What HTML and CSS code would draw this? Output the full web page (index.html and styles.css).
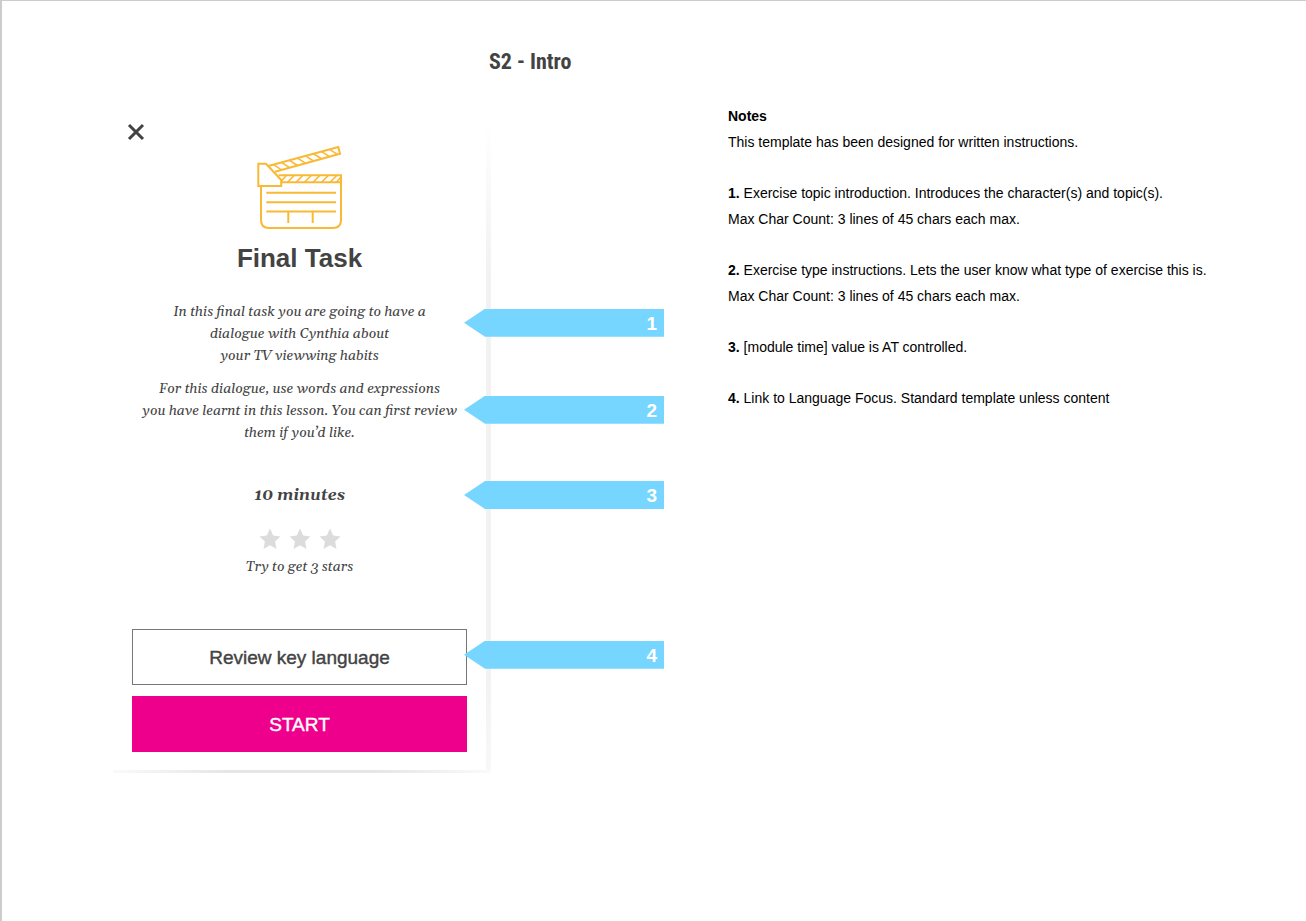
FILE: index.html
```html
<!DOCTYPE html>
<html lang="en">
<head>
<meta charset="utf-8">
<meta name="viewport" content="width=device-width, initial-scale=1">
<title>S2 - Intro</title>
<link rel="stylesheet" href="styles.css">
</head>
<body>
<div class="sheet">
  <h1 class="sheet-title">S2 - Intro</h1>
  <div class="columns">
    <main class="card">
      <button class="close" type="button" aria-label="Close">
        <svg width="18" height="18" viewBox="0 0 18 18"><path d="M2 2L16 16M16 2L2 16"/></svg>
      </button>
      <svg class="clapper" width="86" height="86" viewBox="0.5 0 86 86" aria-hidden="true">
        <path d="M4.500 41V75Q4.500 83 12.500 83H76.500Q84.500 83 84.500 75V30.300H22M24.500 37.300H84"/>
        <path d="M1.800 18.700H9.500L24.700 35V41H1.800Z"/>
        <path d="M11.800 21L81.800 2L83.500 8.700L18.500 26.700"/>
        <path class="hatch" d="M17 19.600L25 24.900M25 17.400L33 22.700M33 15.300L41 20.500M41 13.100L49 18.200M49 10.900L57 16M57 8.800L65 13.800M65 6.600L73 11.600M73 4.400L81 9.400"/>
        <path class="hatch" d="M25 36L30 30.300M31 37.300L38 30.300M39.500 37.300L46.500 30.300M48 37.300L55 30.300M56.500 37.300L63.500 30.300M65 37.300L72 30.300M73.500 37.300L80.500 30.300M80 37.300L84.500 32"/>
        <path d="M9.800 47.700H79.500M9.800 57.300H79.500M9.800 66.500H79.500M31.800 66.500V78M56.200 66.500V78"/>
      </svg>
      <h2 class="card-title">Final Task</h2>
      <div class="annotated topic">
        <p>In this final task you are going to have a<br>dialogue with Cynthia about<br>your TV viewwing habits</p>
        <span class="marker">1</span>
      </div>
      <div class="annotated exercise">
        <p>For this dialogue, use words and expressions<br>you have learnt in this lesson. You can first review<br>them if you’d like.</p>
        <span class="marker">2</span>
      </div>
      <div class="annotated time">
        <strong>10 minutes</strong>
        <span class="marker">3</span>
      </div>
      <div class="stars" aria-hidden="true">
        <svg width="22" height="22" viewBox="0 0 22 22"><path d="M11 0.500L14.200 7.500L21.500 8.400L16.100 13.500L17.500 21L11 17.300L4.500 21L5.900 13.500L0.500 8.400L7.800 7.500Z"/></svg>
        <svg width="22" height="22" viewBox="0 0 22 22"><path d="M11 0.500L14.200 7.500L21.500 8.400L16.100 13.500L17.500 21L11 17.300L4.500 21L5.900 13.500L0.500 8.400L7.800 7.500Z"/></svg>
        <svg width="22" height="22" viewBox="0 0 22 22"><path d="M11 0.500L14.200 7.500L21.500 8.400L16.100 13.500L17.500 21L11 17.300L4.500 21L5.900 13.500L0.500 8.400L7.800 7.500Z"/></svg>
      </div>
      <p class="goal">Try to get 3 stars</p>
      <div class="annotated actions">
        <button class="btn btn-outline" type="button">Review key language</button>
        <span class="marker">4</span>
      </div>
      <button class="btn btn-primary" type="button">START</button>
    </main>
    <aside class="notes">
      <div>
        <h2 class="notes-title">Notes</h2>
        <p>This template has been designed for written instructions.</p>
      </div>
      <p><b>1.</b> Exercise topic introduction. Introduces the character(s) and topic(s).<br>Max Char Count: 3 lines of 45 chars each max.</p>
      <p><b>2.</b> Exercise type instructions. Lets the user know what type of exercise this is.<br>Max Char Count: 3 lines of 45 chars each max.</p>
      <p><b>3.</b> [module time] value is AT controlled.</p>
      <p><b>4.</b> Link to Language Focus. Standard template unless content</p>
    </aside>
  </div>
</div>
</body>
</html>
```
FILE: styles.css
```css
* { box-sizing: border-box; }
body {
  margin: 0;
  background: #fff;
  color: #000;
  font-family: "Liberation Sans", Arial, sans-serif;
}
h1, h2, p { margin: 0; }
button { font: inherit; cursor: pointer; }

.sheet {
  min-height: 100vh;
  border-top: 1px solid #ccc;
  border-left: 2px solid #ccc;
  padding: 48px 40px 40px 111px;
}
.sheet-title {
  padding-left: 376px;
  color: #434343;
  font-family: "Roboto Condensed", Roboto, sans-serif;
  font-size: 22px;
  line-height: 26px;
}
.columns {
  display: grid;
  grid-template-columns: 378px minmax(0, 1fr);
  column-gap: 237px;
  align-items: start;
  padding-top: 28px;
}

.card {
  display: flex;
  flex-direction: column;
  padding: 20px 24px 21px 19px;
  color: #434343;
  text-align: center;
  background:
    linear-gradient(to right, #fafafa, #e6e6e6 30%, #e6e6e6 70%, #fafafa) left bottom / 100% 3px no-repeat,
    linear-gradient(to bottom, #fff 3%, #f2f2f2 25%, #f2f2f2 85%, #f8f8f8) right top / 5px 100% no-repeat;
}
.close {
  align-self: flex-start;
  height: 18px;
  margin-left: -5px;
  padding: 0;
  border: 0;
  background: none;
}
.close svg { display: block; fill: none; stroke: #434343; stroke-width: 3; }
.clapper {
  align-self: center;
  margin-top: 4px;
  fill: none;
  stroke: #f9b934;
  stroke-width: 2;
}
.card-title {
  margin-top: 10px;
  font-size: 26px;
  line-height: 34px;
}
.annotated { position: relative; }
.topic, .exercise, .time, .goal {
  font-family: Georgia, Gelasio, "Liberation Serif", serif;
  font-style: italic;
  font-size: 14px;
  line-height: 22px;
}
.topic { margin-top: 26px; }
.exercise { margin-top: 11px; }
.time { margin-top: 40px; font-size: 16px; }
.stars {
  display: flex;
  justify-content: center;
  gap: 8px;
  margin-top: 22px;
}
.stars svg { fill: #dcdcdc; }
.goal { margin-top: 6px; }
.actions { margin-top: 51px; }

.btn {
  display: block;
  width: 100%;
  height: 56px;
  padding: 2px 0 0;
  border: 0;
  font-size: 19px;
}
.btn-outline { border: 1px solid #777; background: #fff; color: #434343; -webkit-text-stroke: 0.4px; }
.btn-primary { margin-top: 11px; background: #ef008c; color: #fff; -webkit-text-stroke: 0.4px; }

.marker {
  position: absolute;
  top: 50%;
  left: calc(100% - 3px);
  width: 200px;
  height: 28px;
  margin-top: -14px;
  padding-right: 7px;
  background: #76d6ff;
  clip-path: polygon(0 50%, 21px 0, 100% 0, 100% 100%, 21px 100%);
  color: #fff;
  font: bold 19px/30px "Liberation Sans", Arial, sans-serif;
  text-align: right;
}
.topic .marker { top: 33%; }
.exercise .marker { top: 48%; }
.actions .marker { top: 46%; }
.hatch { stroke-width: 1.6; }

.notes {
  display: flex;
  flex-direction: column;
  gap: 25px;
  font-size: 14px;
  line-height: 26px;
}
.notes-title { font-size: 14px; }
```
